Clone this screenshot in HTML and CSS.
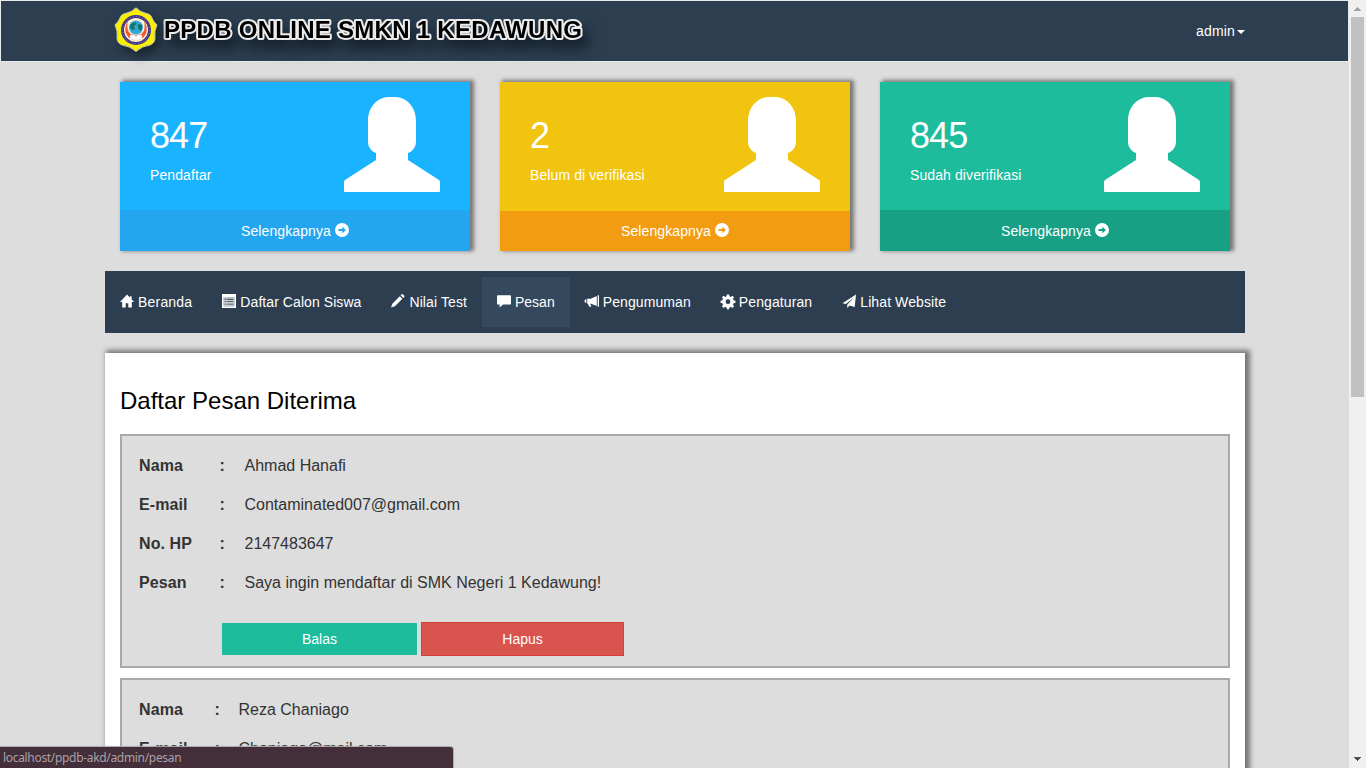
FILE: index.html
```html
<!DOCTYPE html>
<html lang="id">
<head>
<meta charset="utf-8">
<title>PPDB Online SMKN 1 Kedawung</title>
<link rel="stylesheet" href="styles.css">
</head>
<body>
<svg class="defs" width="0" height="0">
  <symbol id="user" viewBox="0 0 96 95"><path d="M48 0h-4C32 1 24 11 24 24v20c0 6 3 10 8 12v7L1 83q-1 1-1 2v9q0 1 1 1h94q1 0 1-1v-9q0-1-1-2L64 63v-7c5-2 8-6 8-12V24C72 11 64 1 52 0z"/></symbol>
  <symbol id="go" viewBox="0 0 14 14"><path fill-rule="evenodd" d="M7 0a7 7 0 1 0 0 14A7 7 0 0 0 7 0zM3.500 5.900h3.800V3.800L11 7l-3.700 3.200V8.100H3.500z"/></symbol>
</svg>
<div class="window">
  <div class="page">
    <header class="topbar">
      <div class="brand">
        <svg class="crest" viewBox="0 0 44 46">
          <path d="M22 .8Q26 5 31 6Q37 7 38 11Q39 14 43 18Q40 24 41 31Q41 36 36 38Q28 39 22 44.500Q16 39 8 38Q3 36 3 31Q4 24 1 18Q5 14 6 11Q7 7 13 6Q18 5 22 .8z" fill="#f8f000" stroke="#c4c4b4" stroke-width="1"/>
          <circle cx="22" cy="23" r="12" fill="#fdf3d8"/>
          <circle cx="22" cy="23" r="13.500" fill="none" stroke="#43318c" stroke-width="3"/>
          <circle cx="22" cy="23" r="13.500" fill="none" stroke="#9185c0" stroke-width="1" stroke-dasharray="1.200 1.800"/>
          <path d="M14 14q-7 12 4 19h8q11-7 4-19q3 14-8 14q-11 0-8-14z" fill="#f0592b"/>
          <circle cx="22" cy="20.500" r="7" fill="#35a7d6"/>
          <path d="M17 17l4-2 2 2-3 2 1 3-3 1-2-3zM24 17l4 1v4l-2 2-2-3z" fill="#147566"/>
          <path d="M16 28q3-1 6 1q3-2 6-1v5q-3-1-6 1q-3-2-6-1z" fill="#fff" stroke="#d2c5bd" stroke-width=".5"/>
        </svg>
        <svg class="wordmark" viewBox="0 0 450 52"><text x="5" y="36.500" textLength="418" lengthAdjust="spacing">PPDB ONLINE SMKN 1 KEDAWUNG</text></svg>
      </div>
      <a class="account">admin<i class="caret"></i></a>
    </header>
    <main class="container">
      <section class="stats">
        <article class="card blue"><div class="card-body"><div><div class="count">847</div><div class="what">Pendaftar</div></div><svg class="person"><use href="#user"/></svg></div><a class="card-foot">Selengkapnya <svg class="go"><use href="#go"/></svg></a></article>
        <article class="card yellow"><div class="card-body"><div><div class="count">2</div><div class="what">Belum di verifikasi</div></div><svg class="person"><use href="#user"/></svg></div><a class="card-foot">Selengkapnya <svg class="go"><use href="#go"/></svg></a></article>
        <article class="card green"><div class="card-body"><div><div class="count">845</div><div class="what">Sudah diverifikasi</div></div><svg class="person"><use href="#user"/></svg></div><a class="card-foot">Selengkapnya <svg class="go"><use href="#go"/></svg></a></article>
      </section>
      <nav class="menu">
        <a><svg viewBox="0 0 16 16"><path d="M8 .5L0 9h2.500v6.500h4V10.500h3v5h4V9H16L13.300 6.100V2.500h-2V4z"/></svg>Beranda</a>
        <a><svg viewBox="0 0 16 16"><path fill-rule="evenodd" d="M0 0h16v16H0zM2 3.500v10.500h12V3.500z"/><path fill="#c9ced3" d="M2 3.500h12V14H2z"/><path fill="#2c3e50" d="M3 5.500h2v1H3zM6 5.500h7v1H6zM3 8.200h2v1H3zM6 8.200h7v1H6zM3 11h2v1H3zM6 11h7v1H6z"/></svg>Daftar Calon Siswa</a>
        <a><svg viewBox="0 0 16 16"><path d="M0 15.500L1.500 11 10 2.500 13 5.500 4.500 14zM11 1.500L12.300.3q.6-.5 1.200 0L15.200 2q.5.600 0 1.200L14 4.500z"/></svg>Nilai Test</a>
        <a class="active"><svg viewBox="0 0 16 16"><path d="M1 1.500h14q1 0 1 1v8.500q0 1-1 1H7l-4 3.500V12H1q-1 0-1-1V2.500q0-1 1-1z"/></svg>Pesan</a>
        <a><svg viewBox="0 0 16 16"><path d="M14.500 1.500H16v13h-1.500zM13.500 2.200v11.600L7 11H6l1.200 3.500H5L3.300 11H2.500V5.300H6.500zM-.5 7l2-1.500v5L-.5 9z"/></svg>Pengumuman</a>
        <a><svg viewBox="0 0 16 16"><path fill-rule="evenodd" d="M6.700.5h2.600l.4 2.200 1.500.6 1.900-1.300 1.800 1.800-1.200 1.900.6 1.500 2.200.4v2.700l-2.200.4-.6 1.500 1.200 1.900-1.800 1.800-1.900-1.200-1.500.6-.4 2.200H6.700l-.4-2.200-1.500-.6-1.900 1.200-1.800-1.800 1.200-1.900-.6-1.500-2.200-.4V7.600l2.200-.4.6-1.500-1.200-1.900L2.900 2l1.900 1.300 1.500-.6zM8 6.100A2.700 2.700 0 1 0 8 11.500 2.700 2.700 0 0 0 8 6.100z"/></svg>Pengaturan</a>
        <a><svg viewBox="0 0 16 16"><path d="M16 .5L.5 10.500 4.500 11.500 13.500 4 6 12.300V16L8.500 13 14.500 14.800z"/></svg>Lihat Website</a>
      </nav>
      <section class="panel">
        <h1>Daftar Pesan Diterima</h1>
        <article class="message">
          <dl class="fields">
            <dt>Nama</dt><b>:</b><dd>Ahmad Hanafi</dd>
            <dt>E-mail</dt><b>:</b><dd>Contaminated007@gmail.com</dd>
            <dt>No. HP</dt><b>:</b><dd>2147483647</dd>
            <dt>Pesan</dt><b>:</b><dd>Saya ingin mendaftar di SMK Negeri 1 Kedawung!</dd>
          </dl>
          <div class="actions"><a class="btn reply">Balas</a><a class="btn remove">Hapus</a></div>
        </article>
        <article class="message">
          <dl class="fields narrow">
            <dt>Nama</dt><b>:</b><dd>Reza Chaniago</dd>
            <dt>E-mail</dt><b>:</b><dd>Chaniago@mail.com</dd>
          </dl>
        </article>
      </section>
    </main>
  </div>
  <aside class="scrollbar">
    <svg viewBox="0 0 7 4"><path d="M3 0h1v1h1v1h1v1h1v1H0V3h1V2h1V1h1z" fill="#a3a3a3"/></svg>
    <div class="thumb"></div>
    <svg class="down" viewBox="0 0 7 4"><path d="M3 4h1V3h1V2h1V1h1V0H0v1h1v1h1v1h1z" fill="#505050"/></svg>
  </aside>
  <div class="status">localhost/ppdb-akd/admin/pesan</div>
</div>
</body>
</html>
```
FILE: styles.css
```css
* { box-sizing: border-box; }
body { margin: 0; font: 14px/20px "Liberation Sans", Arial, sans-serif; color: #333; overflow: hidden; }
.defs { position: absolute; }
.window { position: relative; display: flex; width: 1366px; height: 768px; overflow: hidden; background: #ddd; }
.page { width: 1349px; height: 768px; overflow: hidden; }
.topbar { display: flex; justify-content: space-between; width: 1349px; height: 62px; padding: 0 103px 0 112px; border: 1px solid #e7ecec; background: #2c3e50; color: #fff; }
.brand { display: flex; }
.crest { width: 46px; height: 46px; margin-top: 6px; filter: drop-shadow(4px 5px 5px #18232d); }
.wordmark { width: 450px; height: 52px; overflow: visible; }
.wordmark text { font: bold 24px "Liberation Sans", Arial, sans-serif; fill: #000; stroke: #ececec; stroke-width: 4px; stroke-linejoin: round; paint-order: stroke; filter: drop-shadow(6px 9px 7px #14202b); }
.account { display: flex; align-items: center; gap: 2px; height: 60px; letter-spacing: .15px; }
.caret { border: 4px solid transparent; border-top-color: #fff; border-bottom: 0; margin-top: 1px; }
.container { width: 1140px; margin: 20px 0 0 105px; }
.stats { display: grid; grid-template-columns: repeat(3, 350px); gap: 30px; padding: 0 15px; }
.card { height: 169px; display: flex; flex-direction: column; color: #fff; box-shadow: 3px -1px 4px 1px #777; letter-spacing: .1px; }
.card-body { flex: 1; display: flex; justify-content: space-between; padding: 15px 30px 0; }
.count { font-size: 36px; line-height: 40px; margin-top: 19px; letter-spacing: -.9px; }
.what { margin-top: 9px; }
.person { width: 96px; height: 95px; fill: #fff; }
.card-foot { display: flex; align-items: center; justify-content: center; gap: 4px; height: 41px; }
.go { width: 14px; height: 14px; fill: #fff; margin-top: -2px; }
.blue { background: #1ab3ff; }
.blue .card-foot { background: #24a5f0; }
.yellow { background: #f1c40f; }
.yellow .card-foot { background: #f39c12; height: 40px; }
.green { background: #1cbc9c; }
.green .card-foot { background: #18a085; }
.menu { display: flex; height: 62px; margin-top: 20px; padding: 6px 0; background: #2c3e50; color: #fff; letter-spacing: .1px; }
.menu a { display: flex; align-items: center; gap: 4px; height: 50px; padding: 0 15px; }
.menu a:first-child { letter-spacing: .2px; }
.menu a:nth-child(2) { letter-spacing: .07px; }
.menu svg { width: 14px; height: 14px; fill: #fff; margin-top: -2px; overflow: visible; }
.menu .active { background: #34495e; letter-spacing: 0; }
.panel { height: 600px; margin-top: 20px; padding: 33px 15px 0; background: #fff; box-shadow: 3px -1px 5px 2px #777; }
h1 { margin: 0 0 18px; font-size: 24px; line-height: 30px; font-weight: 400; color: #000; }
.message { height: 234px; margin-bottom: 10px; padding: 10px 17px 0; border: 2px solid #a9a9a9; background: #ddd; }
.fields { display: grid; grid-template-columns: 80.500px 25px 1fr; grid-auto-rows: 39px; align-items: center; margin: 0; font-size: 16px; }
.fields.narrow { grid-template-columns: 75.500px 24px 1fr; }
.fields dd { margin: 0; }
.fields dt { font-weight: 700; letter-spacing: .1px; }
.actions { display: flex; align-items: center; gap: 4px; padding: 20px 0 0 83px; }
.btn { display: flex; align-items: center; justify-content: center; width: 195px; height: 32px; color: #fff; }
.reply { background: #1cbc9c; }
.remove { width: 203px; height: 34px; border: 1px solid #d43f3a; background: #d9534f; }
.scrollbar { display: flex; flex-direction: column; align-items: center; width: 17px; padding: 7px 0; background: #f0f0f0; }
.scrollbar svg { width: 7px; height: 4px; }
.thumb { width: 13px; height: 380px; margin-top: 6px; background: #c1c1c1; }
.scrollbar .down { margin-top: auto; }
.status { position: absolute; left: 0; bottom: 0; width: 453px; height: 21px; padding-left: 3px; border-radius: 0 3px 0 0; background: #432e3a; color: #aaa0a6; font: 12px/21px "Noto Sans", sans-serif; letter-spacing: -.32px; box-shadow: 0 0 1px 1px #aaa; }
```
